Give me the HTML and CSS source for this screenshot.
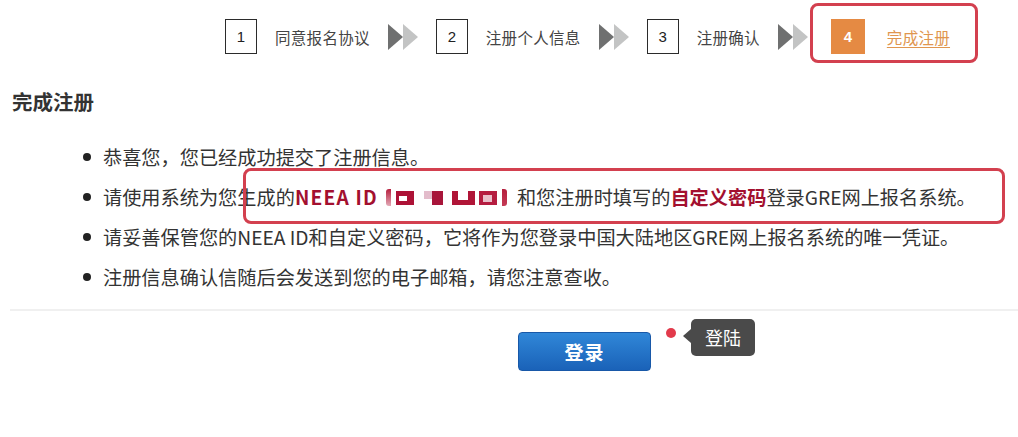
FILE: index.html
```html
<!DOCTYPE html>
<html lang="zh-CN">
<head>
<meta charset="utf-8">
<title>完成注册</title>
<link rel="stylesheet" href="styles.css">
</head>
<body>
<div class="page">
  <div class="stepper">
    <div class="step">
      <span class="num">1</span>
      <span class="label">同意报名协议</span>
    </div>
    <span class="arrows"><i class="dark"></i><i class="light"></i></span>
    <div class="step">
      <span class="num">2</span>
      <span class="label">注册个人信息</span>
    </div>
    <span class="arrows"><i class="dark"></i><i class="light"></i></span>
    <div class="step">
      <span class="num">3</span>
      <span class="label">注册确认</span>
    </div>
    <span class="arrows"><i class="dark"></i><i class="light"></i></span>
    <div class="step current">
      <span class="num">4</span>
      <span class="label">完成注册</span>
      <span class="mark step-mark"></span>
    </div>
  </div>

  <h2 class="title">完成注册</h2>

  <ul class="info">
    <li>恭喜您，您已经成功提交了注册信息。</li>
    <li class="key-line">请使用系统为您生成的<b class="hl latin">NEEA ID</b><span class="masked"><i class="m1"></i><i class="m2"></i><i class="m3"></i><i class="m4"></i><i class="m5"></i><i class="m6"></i><i class="m7"></i></span>和您注册时填写的<b class="hl">自定义密码</b>登录GRE网上报名系统。<span class="mark line-mark"></span></li>
    <li>请妥善保管您的NEEA ID和自定义密码，它将作为您登录中国大陆地区GRE网上报名系统的唯一凭证。</li>
    <li>注册信息确认信随后会发送到您的电子邮箱，请您注意查收。</li>
  </ul>

  <div class="divider"></div>

  <div class="actions">
    <button class="login">登录</button>
    <span class="dot"></span>
    <span class="tip">登陆</span>
  </div>
</div>
</body>
</html>
```
FILE: styles.css
```css
* { box-sizing: border-box; }
html, body { margin: 0; padding: 0; background: #fff; }
body {
  font-family: "Noto Sans CJK SC", "Noto Sans", "Liberation Sans", sans-serif;
  color: #333;
  width: 1018px;
  height: 437px;
  overflow: hidden;
}
.page { position: relative; }

.stepper {
  display: flex;
  align-items: center;
  padding: 19px 0 0 225px;
  height: 54px;
}
.step {
  display: flex;
  align-items: center;
  gap: 18px;
  position: relative;
}
.num {
  width: 32px;
  height: 35px;
  border: 1.5px solid #2b2b2b;
  display: flex;
  align-items: center;
  justify-content: center;
  font-family: "Liberation Sans", sans-serif;
  font-size: 15px;
  color: #222;
}
.label {
  font-size: 15.5px;
  color: #444;
  line-height: 20px;
  letter-spacing: 0.3px;
}
.arrows {
  display: flex;
  margin: 0 18px 0 18px;
}
.arrows i {
  width: 0;
  height: 0;
  border-top: 13px solid transparent;
  border-bottom: 13px solid transparent;
  border-left: 15px solid #6f7070;
}
.arrows i.light { border-left-color: #c3c4c4; }

.step.current { margin-left: 5px; gap: 22px; }
.step.current .num {
  background: #e58a43;
  border-color: #e58a43;
  color: #fff;
  font-weight: bold;
  width: 34px;
}
.step.current .label {
  color: #e0964f;
  text-decoration: underline;
  text-underline-offset: 3px;
}

.mark {
  position: absolute;
  border: 3px solid #d3404f;
  border-radius: 8px;
  pointer-events: none;
}
.step-mark {
  left: -21px;
  top: -16px;
  width: 168px;
  height: 60px;
}

.title {
  margin: 35px 0 0 12px;
  font-size: 20.5px;
  font-weight: bold;
  color: #333;
  line-height: 24px;
}

.info {
  list-style: none;
  margin: 24px 0 0 0;
  padding: 0 0 0 103px;
}
.info li {
  position: relative;
  font-size: 19.2px;
  line-height: 40px;
  height: 40px;
  color: #333;
  white-space: nowrap;
}
.info li::before {
  content: "";
  position: absolute;
  left: -20px;
  top: 16px;
  width: 8px;
  height: 8px;
  border-radius: 50%;
  background: #222;
}
.hl {
  color: #a3102f;
  font-weight: bold;
}
.hl.latin { letter-spacing: 1.2px; }
.masked {
  display: inline-flex;
  align-items: center;
  margin: 0 10px 0 8px;
  height: 16px;
  vertical-align: -1px;
}
.masked i { display: block; height: 14px; }
.masked .m1 {
  width: 5px; height: 17px;
  background: linear-gradient(#b7203f, #e2a9b6);
  border-radius: 3px 0 0 3px;
}
.masked .m2 {
  width: 18px; margin-left: 5px;
  background: linear-gradient(#fff, #fff) 3px 5px / 8px 5px no-repeat,
              linear-gradient(#ad1236, #ad1236) 3px 10px / 5px 4px no-repeat,
              #ad1236;
  background-color: #ad1236;
}
.masked .m3 { width: 8px; height: 8px; margin-top: -6px; background: #e3bccb; margin-left: 10px; }
.masked .m4 { width: 11px; background: #a8153a; }
.masked .m5 {
  width: 23px; margin-left: 9px;
  background: linear-gradient(#fff, #fff) 6px 0 / 10px 9px no-repeat,
              #b01537;
}
.masked .m6 {
  width: 18px; margin-left: 4px;
  background: linear-gradient(#e9bfca, #e9bfca) 4px 4px / 9px 7px no-repeat,
              #b51d40;
}
.masked .m7 {
  width: 5px; height: 17px; margin-left: 5px;
  background: linear-gradient(#b51f3d, #c43a55);
  border-radius: 0 3px 3px 0;
}

.line-mark {
  left: 140px;
  top: -9px;
  width: 762px;
  height: 56px;
}

.divider {
  margin: 12px 0 0 10px;
  height: 2px;
  background: #f0f0f0;
}

.actions {
  position: relative;
  display: flex;
  align-items: flex-start;
  padding: 21px 0 0 518px;
}
.login {
  width: 133px;
  height: 39px;
  border: 1px solid #1858a8;
  border-radius: 4px;
  background: linear-gradient(#3087d8, #1a62b8);
  color: #fff;
  font-family: "Noto Sans CJK SC", sans-serif;
  font-weight: bold;
  font-size: 19px;
  letter-spacing: 1px;
  padding: 0;
}
.dot {
  position: absolute;
  left: 666px;
  top: 17px;
  width: 10px;
  height: 10px;
  border-radius: 50%;
  background: #e23a4b;
}
.tip {
  position: absolute;
  left: 691px;
  top: 8px;
  width: 64px;
  height: 37px;
  border-radius: 5px;
  background: #4a4a4a;
  color: #fff;
  font-size: 18px;
  line-height: 37px;
  text-align: center;
}
.tip::before {
  content: "";
  position: absolute;
  left: -8px;
  top: 10px;
  border-top: 7px solid transparent;
  border-bottom: 7px solid transparent;
  border-right: 8px solid #4a4a4a;
}
```
